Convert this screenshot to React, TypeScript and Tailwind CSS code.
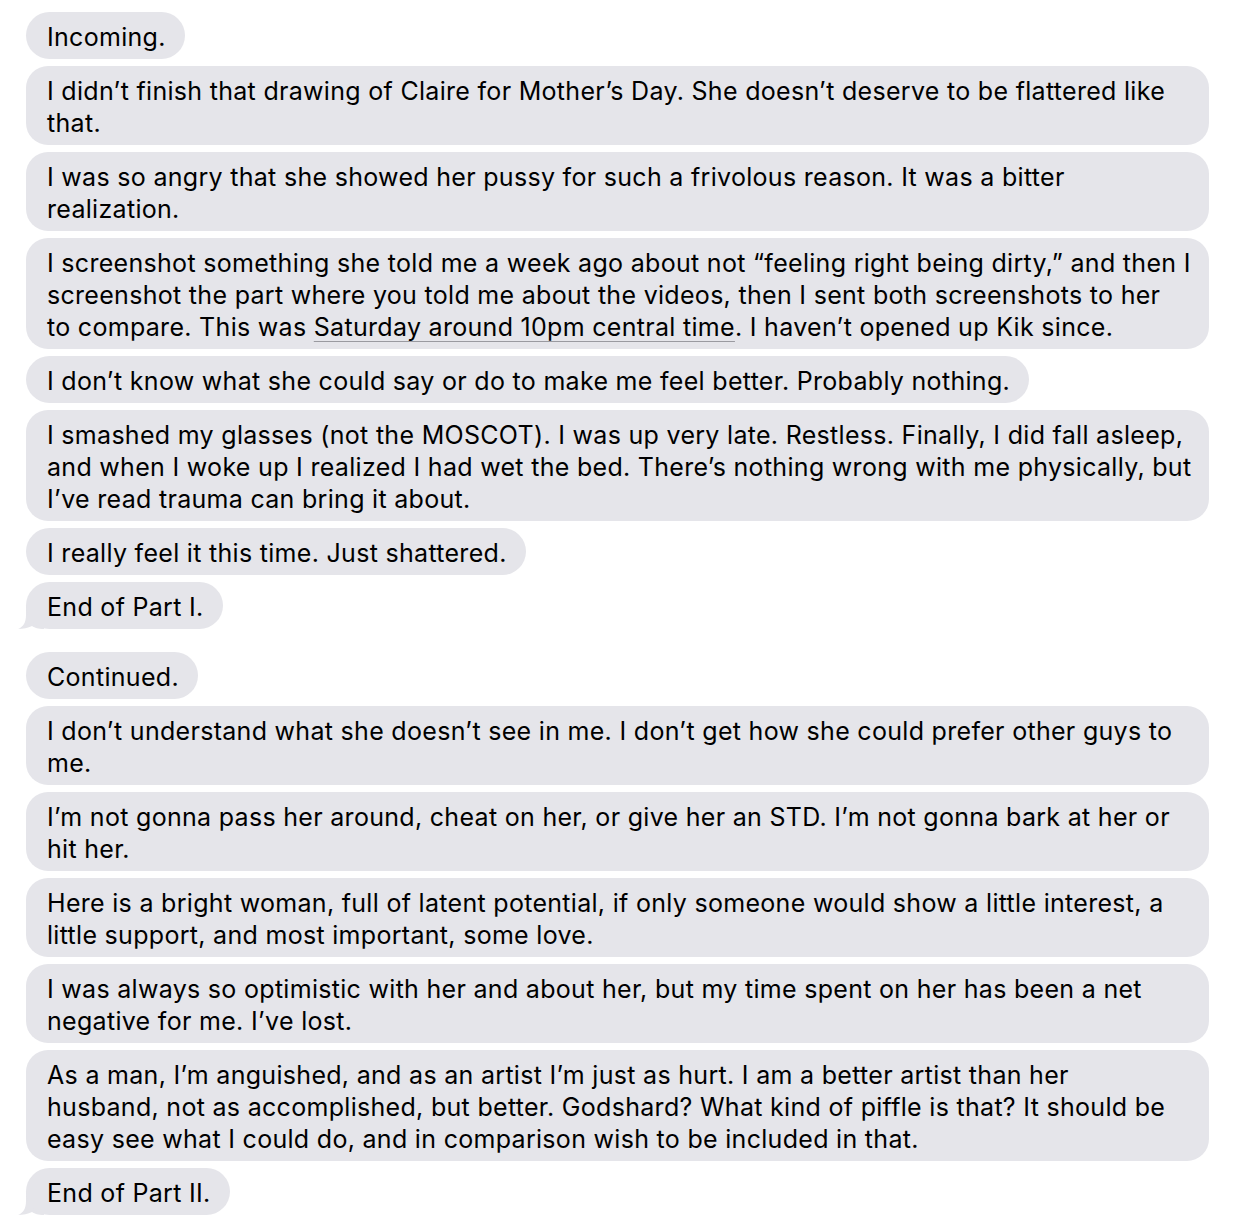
import { ReactNode } from "react";

type BubbleProps = {
    children: ReactNode;
    wide?: boolean;
    tail?: boolean;
};

// grey incoming bubble, with the little hook on the last one of a group
const Bubble = ({ children, wide, tail }: BubbleProps) => {
    return (
        <div className={`relative ${wide ? "w-full" : "w-fit"}`}>
            {tail && (
                <svg
                    className="absolute -left-[8px] bottom-0"
                    width="26"
                    height="24"
                    viewBox="0 0 26 24"
                >
                    <path
                        d="M8 0 L26 0 L26 24 C20 24 17 23 14 21 C10 23 5 24 0 24 C5 22 8 18 8 10 Z"
                        fill="#e5e5ea"
                    />
                </svg>
            )}
            <div
                className={`relative whitespace-nowrap bg-[#e5e5ea] pl-[21px] pr-[19px] pt-[9px] pb-[6px] text-[25px] leading-[32px] text-black ${
                    wide ? "rounded-[22px]" : "rounded-[24px]"
                }`}
            >
                {children}
            </div>
        </div>
    );
};

const App = () => {
    return (
        <div className="min-h-screen bg-white pl-[26px] pr-[27px] pt-[12px] pb-[13px] font-['Inter','Helvetica_Neue','Liberation_Sans',sans-serif] tracking-[0.3px]">
            <div className="flex flex-col gap-[7px]">
                <Bubble>Incoming.</Bubble>
                <Bubble wide>
                    I didn’t finish that drawing of Claire for Mother’s Day. She doesn’t deserve to be flattered like
                    <br />
                    that.
                </Bubble>
                <Bubble wide>
                    I was so angry that she showed her pussy for such a frivolous reason. It was a bitter
                    <br />
                    realization.
                </Bubble>
                <Bubble wide>
                    I screenshot something she told me a week ago about not “feeling right being dirty,” and then I
                    <br />
                    screenshot the part where you told me about the videos, then I sent both screenshots to her
                    <br />
                    to compare. This was{" "}
                    <span className="underline decoration-[#9a9aa0] decoration-1 underline-offset-[5px]">
                        Saturday around 10pm central time
                    </span>
                    . I haven’t opened up Kik since.
                </Bubble>
                <Bubble>
                    I don’t know what she could say or do to make me feel better. Probably nothing.
                </Bubble>
                <Bubble wide>
                    I smashed my glasses (not the MOSCOT). I was up very late. Restless. Finally, I did fall asleep,
                    <br />
                    and when I woke up I realized I had wet the bed. There’s nothing wrong with me physically, but
                    <br />
                    I’ve read trauma can bring it about.
                </Bubble>
                <Bubble>I really feel it this time. Just shattered.</Bubble>
                <Bubble tail>End of Part I.</Bubble>

                <div className="h-[9px]" />

                <Bubble>Continued.</Bubble>
                <Bubble wide>
                    I don’t understand what she doesn’t see in me. I don’t get how she could prefer other guys to
                    <br />
                    me.
                </Bubble>
                <Bubble wide>
                    I’m not gonna pass her around, cheat on her, or give her an STD. I’m not gonna bark at her or
                    <br />
                    hit her.
                </Bubble>
                <Bubble wide>
                    Here is a bright woman, full of latent potential, if only someone would show a little interest, a
                    <br />
                    little support, and most important, some love.
                </Bubble>
                <Bubble wide>
                    I was always so optimistic with her and about her, but my time spent on her has been a net
                    <br />
                    negative for me. I’ve lost.
                </Bubble>
                <Bubble wide>
                    As a man, I’m anguished, and as an artist I’m just as hurt. I am a better artist than her
                    <br />
                    husband, not as accomplished, but better. Godshard? What kind of piffle is that? It should be
                    <br />
                    easy see what I could do, and in comparison wish to be included in that.
                </Bubble>
                <Bubble tail>End of Part II.</Bubble>
            </div>
        </div>
    );
};

export default App;
